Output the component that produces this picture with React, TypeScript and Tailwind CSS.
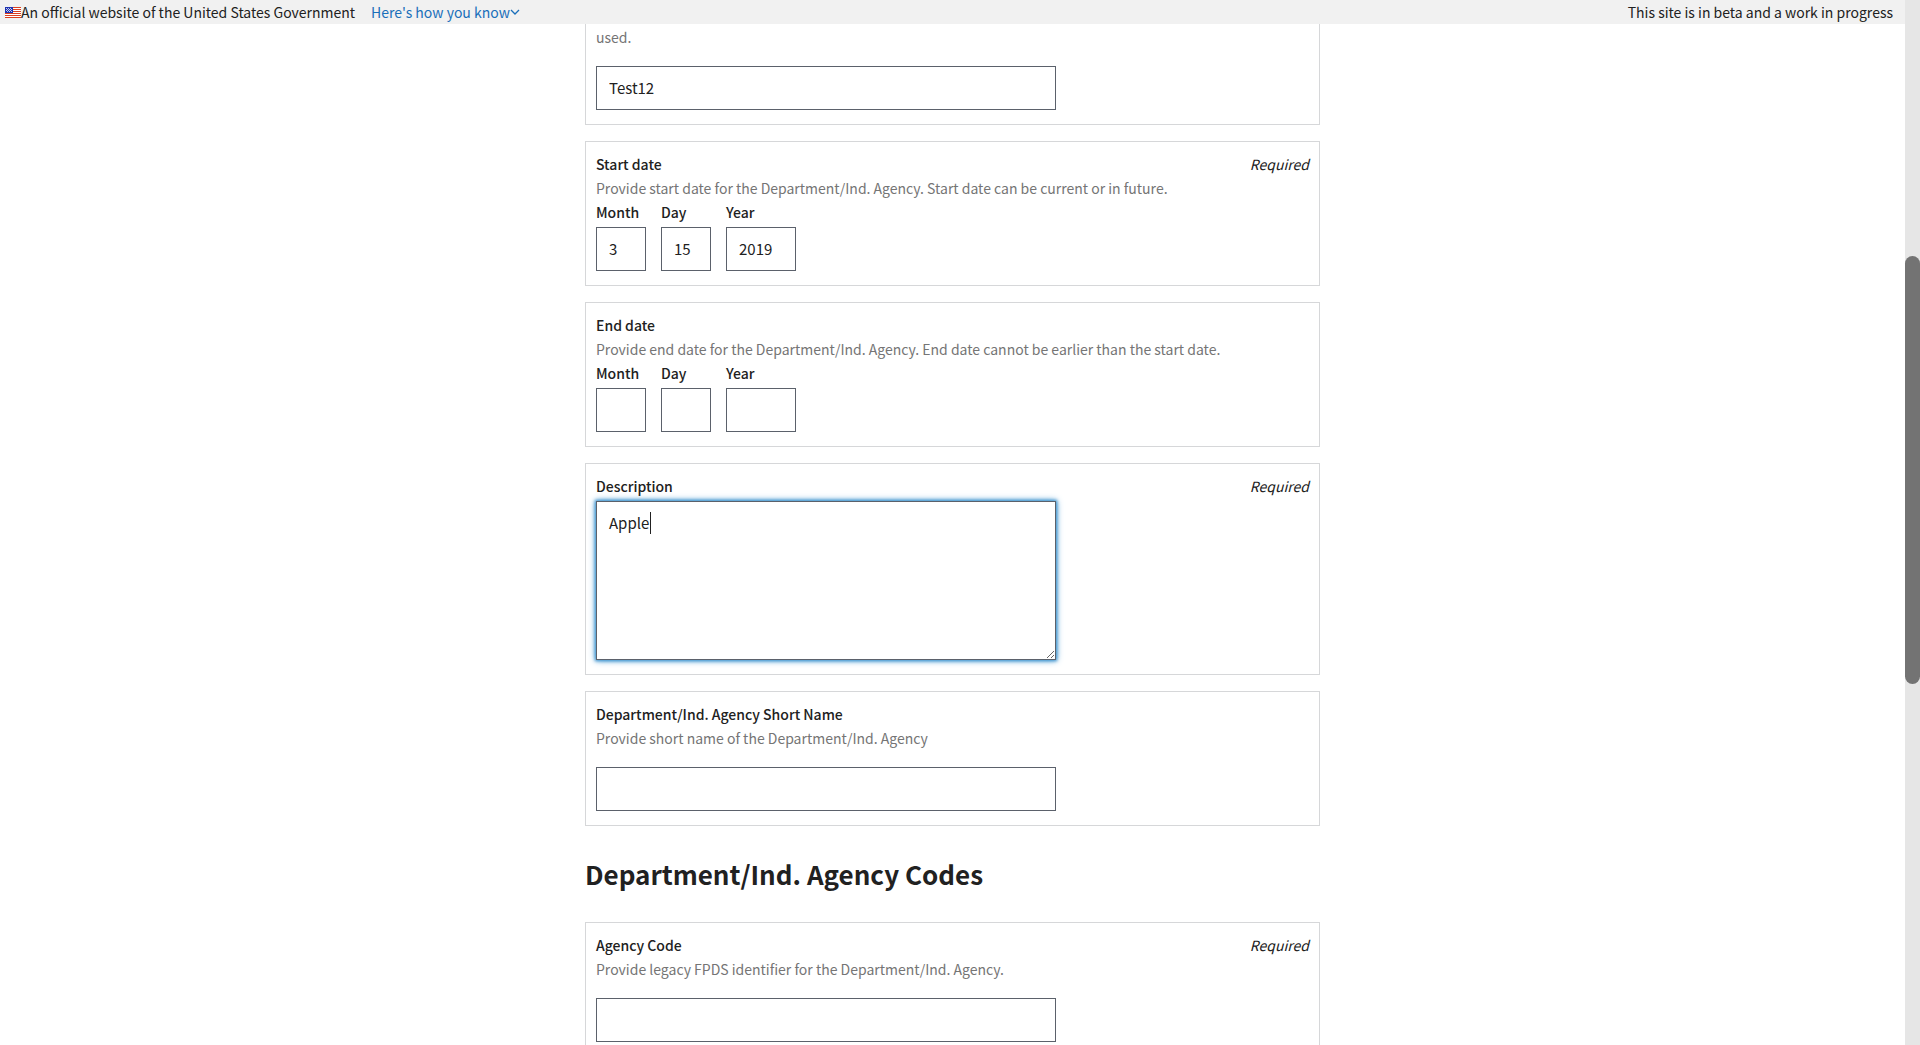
import type { ReactNode } from 'react';

const inputBase =
  'h-11 border border-[#5b616b] bg-white px-3 pb-0.5 text-[15px] text-[#212121] outline-none';

function USFlag() {
  return (
    <svg width="16" height="11" viewBox="0 0 16 11" shapeRendering="crispEdges" aria-hidden="true" className="shrink-0">
      <rect width="16" height="11" fill="#fff" />
      {[0, 2, 4, 6, 8, 10].map((y) => (
        <rect key={y} y={y} width="16" height="1" fill="#db3e1f" />
      ))}
      <rect width="8" height="6" fill="#1e33b1" />
      {[
        [1, 1], [3, 1], [5, 1], [2, 2], [4, 2], [6, 2], [1, 3], [3, 3], [5, 3], [2, 4], [4, 4], [6, 4],
      ].map(([x, y]) => (
        <rect key={`${x}-${y}`} x={x} y={y} width="1" height="1" fill="#c5cbec" />
      ))}
    </svg>
  );
}

function Banner() {
  return (
    <header className="flex h-6 shrink-0 items-center justify-between bg-[#f1f1f1] pr-3 pl-[5px]">
      <div className="flex items-center">
        <USFlag />
        <span>An official website of the United States Government</span>
        <button type="button" className="ml-4 flex items-center text-[#1a6fba]">
          Here's how you know
          <svg width="10" height="6" viewBox="0 0 10 6" fill="none" stroke="currentColor" strokeWidth="1.3" aria-hidden="true">
            <path d="M1 1l4 4 4-4" />
          </svg>
        </button>
      </div>
      <span>This site is in beta and a work in progress</span>
    </header>
  );
}

function Card({ children, first = false }: { children: ReactNode; first?: boolean }) {
  return (
    <div
      className={
        first
          ? 'border border-t-0 border-[#d6d7d9] px-[10px] pt-px pb-[14px]'
          : 'mt-4 border border-[#d6d7d9] px-[10px] pt-[10px] pb-[14px]'
      }
    >
      {children}
    </div>
  );
}

function Title({ children, htmlFor, required }: { children: string; htmlFor?: string; required?: boolean }) {
  return (
    <div className="flex justify-between">
      <label htmlFor={htmlFor} className="font-medium">
        {children}
      </label>
      {required && <span className="italic">Required</span>}
    </div>
  );
}

function Hint({ children }: { children: string }) {
  return <p className="text-[#757575]">{children}</p>;
}

function DateCard({ id, title, hint, values, required }: {
  id: string;
  title: string;
  hint: string;
  values: [string, string, string];
  required?: boolean;
}) {
  return (
    <Card>
      <div role="group" aria-label={title}>
        <Title required={required} htmlFor={`${id}-month`}>{title}</Title>
        <Hint>{hint}</Hint>
        <div className="flex gap-[15px]">
          {['Month', 'Day', 'Year'].map((part, i) => (
            <div key={part} className={part === 'Year' ? 'w-[70px]' : 'w-[50px]'}>
              <label htmlFor={`${id}-${part.toLowerCase()}`} className="block font-medium">
                {part}
              </label>
              <input
                id={`${id}-${part.toLowerCase()}`}
                defaultValue={values[i]}
                className={`${inputBase} mt-[3px] block w-full`}
              />
            </div>
          ))}
        </div>
      </div>
    </Card>
  );
}

function TextCard({ id, title, hint, required }: { id: string; title: string; hint: string; required?: boolean }) {
  return (
    <Card>
      <Title htmlFor={id} required={required}>{title}</Title>
      <Hint>{hint}</Hint>
      <input id={id} className={`${inputBase} mt-[17px] block w-full max-w-[460px]`} />
    </Card>
  );
}

function Scrollbar() {
  return (
    <div aria-hidden="true" className="flex w-[15px] shrink-0 flex-col bg-[#e6e6e6]">
      <div className="flex-[256]" />
      <div className="flex-[428] rounded-full bg-[#737373]" />
      <div className="flex-[361]" />
    </div>
  );
}

export default function App() {
  return (
    <div className="flex h-screen overflow-hidden bg-white font-['Noto_Sans_CJK_JP',sans-serif] text-sm leading-6 text-[#212121]">
      <div className="flex min-w-0 flex-1 flex-col">
        <Banner />
        <main className="min-h-0 flex-1 overflow-hidden">
          <div className="mx-auto w-full max-w-[735px]">
            <Card first>
              <Hint>used.</Hint>
              <input aria-label="Name" defaultValue="Test12" className={`${inputBase} mt-[17px] block w-full max-w-[460px]`} />
            </Card>
            <DateCard
              id="start"
              title="Start date"
              hint="Provide start date for the Department/Ind. Agency. Start date can be current or in future."
              values={['3', '15', '2019']}
              required
            />
            <DateCard
              id="end"
              title="End date"
              hint="Provide end date for the Department/Ind. Agency. End date cannot be earlier than the start date."
              values={['', '', '']}
            />
            <Card>
              <Title htmlFor="description" required>Description</Title>
              <div className="relative mt-[3px] w-full max-w-[460px]">
                <textarea
                  id="description"
                  defaultValue="Apple"
                  className="block h-[159px] w-full resize-y border border-[#5b616b] bg-white px-3 py-[9px] text-[15px] shadow-[0_0_3px_1px_#3e94cf,0_0_7px_#3e94cf] outline-none"
                />
                <span aria-hidden="true" className="absolute top-[11px] left-[54px] h-[22px] w-px bg-[#212121]" />
              </div>
            </Card>
            <TextCard
              id="short-name"
              title="Department/Ind. Agency Short Name"
              hint="Provide short name of the Department/Ind. Agency"
            />
            <h2 className="my-8 text-[26px] leading-8 font-bold">Department/Ind. Agency Codes</h2>
            <TextCard
              id="agency-code"
              title="Agency Code"
              hint="Provide legacy FPDS identifier for the Department/Ind. Agency."
              required
            />
          </div>
        </main>
      </div>
      <Scrollbar />
    </div>
  );
}
